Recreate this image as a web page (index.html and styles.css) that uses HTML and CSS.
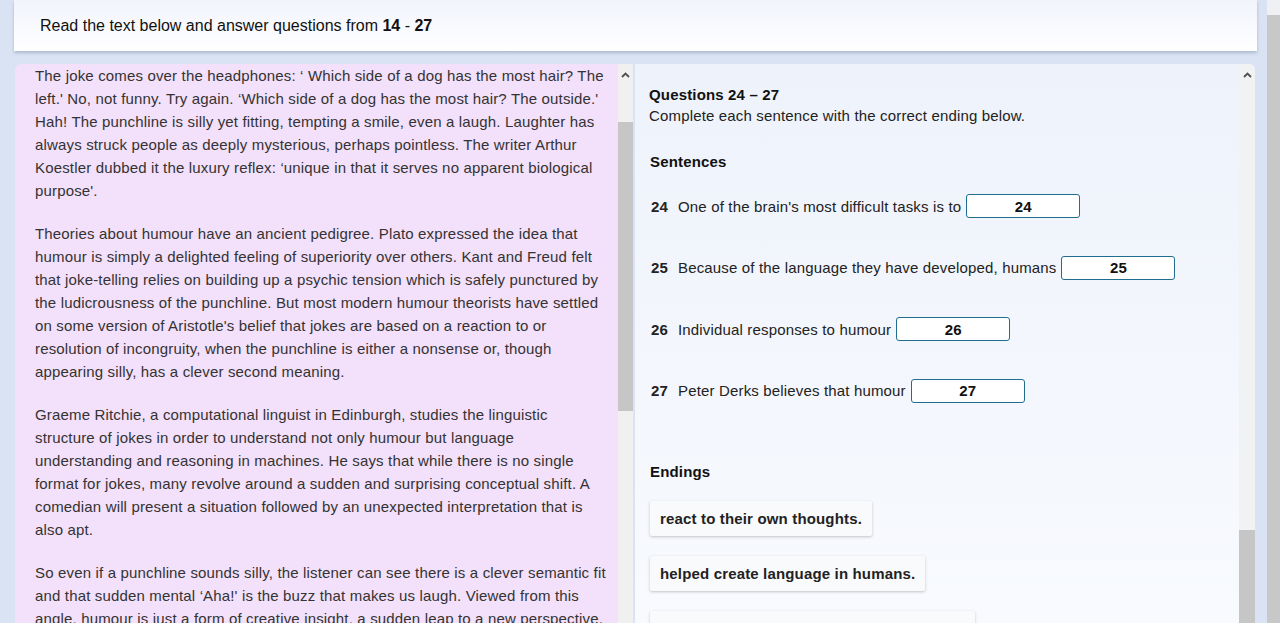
FILE: index.html
```html
<!DOCTYPE html>
<html lang="en">
<head>
<meta charset="utf-8">
<title>Reading passage</title>
<link rel="stylesheet" href="styles.css">
</head>
<body>
<div class="app">
  <div class="page">
    <header class="header">
      <p>Read the text below and answer questions from <b>14</b> - <b>27</b></p>
    </header>
    <div class="panels">
      <section class="panel passage">
        <div class="passage-body">
          <p>The joke comes over the headphones: ‘ Which side of a dog has the most hair? The left.' No, not funny. Try again. ‘Which side of a dog has the most hair? The outside.' Hah! The punchline is silly yet fitting, tempting a smile, even a laugh. Laughter has always struck people as deeply mysterious, perhaps pointless. The writer Arthur Koestler dubbed it the luxury reflex: ‘unique in that it serves no apparent biological purpose'.</p>
          <p>Theories about humour have an ancient pedigree. Plato expressed the idea that humour is simply a delighted feeling of superiority over others. Kant and Freud felt that joke-telling relies on building up a psychic tension which is safely punctured by the ludicrousness of the punchline. But most modern humour theorists have settled on some version of Aristotle's belief that jokes are based on a reaction to or resolution of incongruity, when the punchline is either a nonsense or, though appearing silly, has a clever second meaning.</p>
          <p>Graeme Ritchie, a computational linguist in Edinburgh, studies the linguistic structure of jokes in order to understand not only humour but language understanding and reasoning in machines. He says that while there is no single format for jokes, many revolve around a sudden and surprising conceptual shift. A comedian will present a situation followed by an unexpected interpretation that is also apt.</p>
          <p>So even if a punchline sounds silly, the listener can see there is a clever semantic fit and that sudden mental ‘Aha!' is the buzz that makes us laugh. Viewed from this angle, humour is just a form of creative insight, a sudden leap to a new perspective.</p>
        </div>
        <div class="scrollbar left-bar">
          <div class="arrow"><svg width="9" height="6" viewBox="0 0 9 6"><path d="M1 5 L4.5 1.5 L8 5" fill="none" stroke="#505050" stroke-width="1.8"/></svg></div>
          <div class="thumb left-thumb"></div>
        </div>
      </section>
      <section class="panel questions">
        <div class="questions-body">
          <h2 class="q-title">Questions 24 – 27</h2>
          <p class="q-instr">Complete each sentence with the correct ending below.</p>
          <h3 class="sub">Sentences</h3>
          <ol class="sentences">
            <li class="sentence"><b class="num">24</b><span>One of the brain's most difficult tasks is to</span><span class="drop">24</span></li>
            <li class="sentence"><b class="num">25</b><span>Because of the language they have developed, humans</span><span class="drop">25</span></li>
            <li class="sentence"><b class="num">26</b><span>Individual responses to humour</span><span class="drop">26</span></li>
            <li class="sentence"><b class="num">27</b><span>Peter Derks believes that humour</span><span class="drop">27</span></li>
          </ol>
          <h3 class="sub endings-title">Endings</h3>
          <div class="endings">
            <div class="ending">react to their own thoughts.</div>
            <div class="ending">helped create language in humans.</div>
            <div class="ending">relate to a person's own subjective views.</div>
          </div>
        </div>
        <div class="scrollbar right-bar">
          <div class="arrow"><svg width="9" height="6" viewBox="0 0 9 6"><path d="M1 5 L4.5 1.5 L8 5" fill="none" stroke="#505050" stroke-width="1.8"/></svg></div>
          <div class="right-spacer"></div>
          <div class="thumb right-thumb"></div>
        </div>
      </section>
    </div>
  </div>
  <div class="page-scroll">
    <div class="page-scroll-top"></div>
    <div class="page-scroll-thumb"></div>
  </div>
</div>
</body>
</html>
```
FILE: styles.css
```css
html, body {
  margin: 0;
  padding: 0;
  height: 623px;
  overflow: hidden;
}
body {
  background: #dae3f3;
  font-family: "Liberation Sans", Arial, sans-serif;
  color: #222;
}
.app {
  display: flex;
  height: 623px;
  padding-left: 14px;
}
.page {
  width: 1243px;
  display: flex;
  flex-direction: column;
}
.header {
  height: 51px;
  background: linear-gradient(#f1f4fc, #ffffff);
  box-shadow: 0 2px 3px rgba(90, 110, 150, 0.35);
  display: flex;
  align-items: center;
  padding-left: 26px;
}
.header p {
  margin: 0;
  font-size: 16px;
  color: #111;
  padding-top: 1px;
}
.panels {
  display: flex;
  margin-top: 13px;
  flex: 1;
  min-height: 0;
}
.panel {
  display: flex;
  overflow: hidden;
}
.passage {
  margin-left: 1px;
  width: 618px;
  background: #f3e0fa;
  border-top-left-radius: 6px;
}
.passage-body {
  flex: 1;
  padding: 0 10px 0 20px;
  font-size: 15px;
  line-height: 23px;
  letter-spacing: 0.16px;
  color: #333;
}
.passage-body p {
  margin: 0 0 20px;
}
.scrollbar {
  display: flex;
  flex-direction: column;
  background: #f0f0f0;
}
.left-bar {
  width: 15px;
}
.right-bar {
  width: 16px;
  background: #f1f2f4;
}
.arrow {
  height: 14px;
  display: flex;
  justify-content: center;
  align-items: flex-end;
}
.left-thumb {
  margin-top: 44px;
  height: 289px;
  background: #c6c6c6;
}
.right-spacer {
  flex: 1;
}
.right-thumb {
  height: 93px;
  background: #c6c6c6;
}
.questions {
  margin-left: 2px;
  width: 620px;
  background: linear-gradient(#eef2fb, #f8fafe);
  border-top-right-radius: 6px;
}
.questions-body {
  flex: 1;
  padding: 20px 0 0 14px;
  font-size: 15px;
  letter-spacing: 0.16px;
  color: #222;
}
.q-title {
  margin: 0;
  font-size: 15px;
  line-height: 21px;
  color: #111;
}
.q-instr {
  margin: 0;
  line-height: 21px;
}
.sub {
  margin: 25px 0 0 1px;
  font-size: 15px;
  line-height: 21px;
  color: #111;
}
.sentences {
  list-style: none;
  margin: 22px 0 0;
  padding: 0;
  display: flex;
  flex-direction: column;
  gap: 37.5px;
}
.sentence {
  display: flex;
  align-items: center;
  height: 24px;
  padding-left: 2px;
}
.num {
  margin-right: 10px;
  color: #222;
}
.drop {
  margin-left: 5px;
  width: 112px;
  height: 22px;
  border: 1px solid #1e6e8c;
  border-radius: 3px;
  background: #fff;
  font-weight: bold;
  color: #111;
  display: flex;
  justify-content: center;
  align-items: center;
}
.endings-title {
  margin-top: 58px;
}
.endings {
  margin-top: 19px;
  display: flex;
  flex-direction: column;
  align-items: flex-start;
  gap: 20px;
  padding-left: 1px;
}
.ending {
  background: #f9fafc;
  box-shadow: 0 1px 3px rgba(0, 0, 0, 0.22);
  border-radius: 2px;
  padding: 0 10px;
  height: 35px;
  line-height: 35px;
  font-weight: bold;
  color: #222;
}
.page-scroll {
  margin-left: 10px;
  width: 13px;
  display: flex;
  flex-direction: column;
}
.page-scroll-top {
  height: 15px;
  background: #eef0f4;
}
.page-scroll-thumb {
  flex: 1;
  background: #c8c8c8;
}
```
